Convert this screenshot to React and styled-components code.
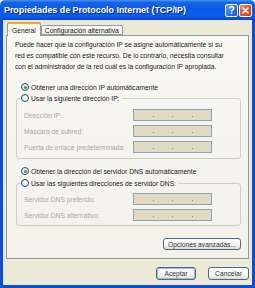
import React from 'react'
import styled, { createGlobalStyle } from 'styled-components'

const GlobalStyle = createGlobalStyle`
  body { margin: 0; background: #ffffff; }
  * { box-sizing: border-box; }
`

const Window = styled.div`
  width: 255px;
  height: 288px;
  display: flex;
  flex-direction: column;
  font-family: "Liberation Sans", Arial, sans-serif;
  font-size: 6.7px;
  color: #222222;
`

const TitleBar = styled.div`
  height: 20px;
  display: flex;
  align-items: center;
  padding: 0 3px 0 4px;
  background: linear-gradient(#4a93f6 0%, #1766e6 12%, #0a58e4 45%, #0b5ef0 80%, #0846c9 100%);
  border-radius: 5px 5px 0 0;
`

const Title = styled.div`
  flex: 1;
  color: #ffffff;
  font-weight: bold;
  font-size: 8.9px;
  text-shadow: 1px 1px 0 #0a2a8a;
  white-space: nowrap;
`

const CaptionButton = styled.div`
  width: 13px;
  height: 13px;
  margin-left: 1px;
  border: 1px solid #ffffff;
  border-radius: 2px;
  display: flex;
  align-items: center;
  justify-content: center;
  color: #ffffff;
  font-weight: bold;
  font-size: 10px;
  background: ${p => p.$close
    ? 'linear-gradient(135deg, #f08a63, #e0542b 55%, #c8401a)'
    : 'linear-gradient(135deg, #6aa6ff, #2f72ea 55%, #1d56d0)'};
`

const Body = styled.div`
  flex: 1;
  display: flex;
  flex-direction: column;
  background: #ece9d8;
  border: 3px solid #0a4fd6;
  border-top: none;
  padding: 2px 3px 0 3px;
`

const TabRow = styled.div`
  height: 13px;
  display: flex;
  align-items: flex-end;
  padding-left: 1px;
  position: relative;
  z-index: 1;
`

const Tab = styled.div`
  height: ${p => (p.$active ? '14px' : '10px')};
  margin-bottom: ${p => (p.$active ? '-1px' : '0')};
  padding: 0 ${p => (p.$active ? '4px' : '3px')};
  display: flex;
  align-items: center;
  border: 1px solid #919b9c;
  border-bottom: ${p => (p.$active ? 'none' : '1px solid #919b9c')};
  border-top: ${p => (p.$active ? '2px solid #f3a63c' : '1px solid #919b9c')};
  border-radius: 2px 2px 0 0;
  background: ${p => (p.$active ? '#f7f6f2' : 'linear-gradient(#ffffff, #ecebe4)')};
  white-space: nowrap;
`

const Panel = styled.div`
  height: 224px;
  display: flex;
  flex-direction: column;
  border: 1px solid #919b9c;
  background: linear-gradient(#f8f7f3, #f3f1ea);
  padding: 3px 7px 0 8px;
`

const Intro = styled.p`
  margin: 0;
  line-height: 11px;
  white-space: nowrap;
`

const RadioRow = styled.label`
  height: 12px;
  display: flex;
  align-items: center;
  gap: 2px;
  margin-left: 6px;
  margin-top: ${p => p.$top || 0}px;
  white-space: nowrap;
`

const RadioDot = styled.span`
  width: 8px;
  height: 8px;
  border-radius: 50%;
  border: 1px solid #1c5180;
  background: radial-gradient(circle at 65% 65%, #ffffff, #e2ded3);
  display: flex;
  align-items: center;
  justify-content: center;
  &::after {
    content: '';
    width: 3px;
    height: 3px;
    border-radius: 50%;
    background: ${p => (p.$checked ? '#2ca52c' : 'transparent')};
  }
`

const Group = styled.fieldset`
  margin: ${p => p.$top || 0}px 0 0 1px;
  border: 1px solid #d0d0bf;
  border-radius: 3px;
  padding: ${p => p.$pad}px 0 ${p => p.$pad}px 7px;
  display: flex;
  flex-direction: column;
  gap: 4px;
`

const Legend = styled.legend`
  padding: 0 3px 0 0;
  margin-left: -3px;
  height: 12px;
`

const LegendRow = styled.span`
  height: 12px;
  display: flex;
  align-items: center;
  gap: 2px;
  white-space: nowrap;
`

const FieldRow = styled.div`
  display: grid;
  grid-template-columns: 109px 79px;
  align-items: center;
  height: 12px;
`

const FieldLabel = styled.span`
  color: #aca899;
  white-space: nowrap;
`

const IpBox = styled.div`
  height: 12px;
  border: 1px solid #8fa3b8;
  background: #e0dac3;
  display: flex;
  justify-content: space-evenly;
  align-items: center;
  padding-top: 2px;
`

const IpDot = styled.span`
  width: 1px;
  height: 1px;
  background: #8f8a78;
`

const Button = styled.div`
  width: ${p => p.$w}px;
  height: ${p => p.$h || 13}px;
  display: flex;
  align-items: center;
  justify-content: center;
  border: 1px solid #4c6a8e;
  border-radius: 3px;
  background: linear-gradient(#ffffff, #f2f1ec 70%, #dcd8cc);
  box-shadow: ${p => (p.$default ? 'inset 0 0 0 1px #9ab8ea' : 'none')};
  color: #333333;
  white-space: nowrap;
`

const AdvancedRow = styled.div`
  display: flex;
  justify-content: flex-end;
  margin-top: 12px;
`

const Footer = styled.div`
  display: flex;
  justify-content: flex-end;
  gap: 12px;
  margin-top: 8px;
`

function IpField() {
  return (
    <IpBox>
      <IpDot />
      <IpDot />
      <IpDot />
    </IpBox>
  )
}

function Field({ label }) {
  return (
    <FieldRow>
      <FieldLabel>{label}</FieldLabel>
      <IpField />
    </FieldRow>
  )
}

function CloseIcon() {
  return (
    <svg width="7" height="7" viewBox="0 0 7 7">
      <path d="M1 1 L6 6 M6 1 L1 6" stroke="#ffffff" strokeWidth="1.6" strokeLinecap="round" />
    </svg>
  )
}

export default function App() {
  return (
    <>
      <GlobalStyle />
      <Window>
        <TitleBar>
          <Title>Propiedades de Protocolo Internet (TCP/IP)</Title>
          <CaptionButton>?</CaptionButton>
          <CaptionButton $close>
            <CloseIcon />
          </CaptionButton>
        </TitleBar>
        <Body>
          <TabRow>
            <Tab $active>General</Tab>
            <Tab>Configuración alternativa</Tab>
          </TabRow>
          <Panel>
            <Intro>
              Puede hacer que la configuración IP se asigne automáticamente si su<br />
              red es compatible con este recurso. De lo contrario, necesita consultar<br />
              con el administrador de la red cuál es la configuración IP apropiada.
            </Intro>

            <RadioRow $top={9}>
              <RadioDot $checked />
              Obtener una dirección IP automáticamente
            </RadioRow>
            <Group $top={-1} $pad={5}>
              <Legend>
                <LegendRow>
                  <RadioDot />
                  Usar la siguiente dirección IP:
                </LegendRow>
              </Legend>
              <Field label="Dirección IP:" />
              <Field label="Máscara de subred:" />
              <Field label="Puerta de enlace predeterminada:" />
            </Group>

            <RadioRow $top={6}>
              <RadioDot $checked />
              Obtener la dirección del servidor DNS automáticamente
            </RadioRow>
            <Group $top={0} $pad={4}>
              <Legend>
                <LegendRow>
                  <RadioDot />
                  Usar las siguientes direcciones de servidor DNS:
                </LegendRow>
              </Legend>
              <Field label="Servidor DNS preferido:" />
              <Field label="Servidor DNS alternativo:" />
            </Group>

            <AdvancedRow>
              <Button $w={78} $h={12}>Opciones avanzadas...</Button>
            </AdvancedRow>
          </Panel>
          <Footer>
            <Button $w={40} $default>Aceptar</Button>
            <Button $w={41}>Cancelar</Button>
          </Footer>
        </Body>
      </Window>
    </>
  )
}
